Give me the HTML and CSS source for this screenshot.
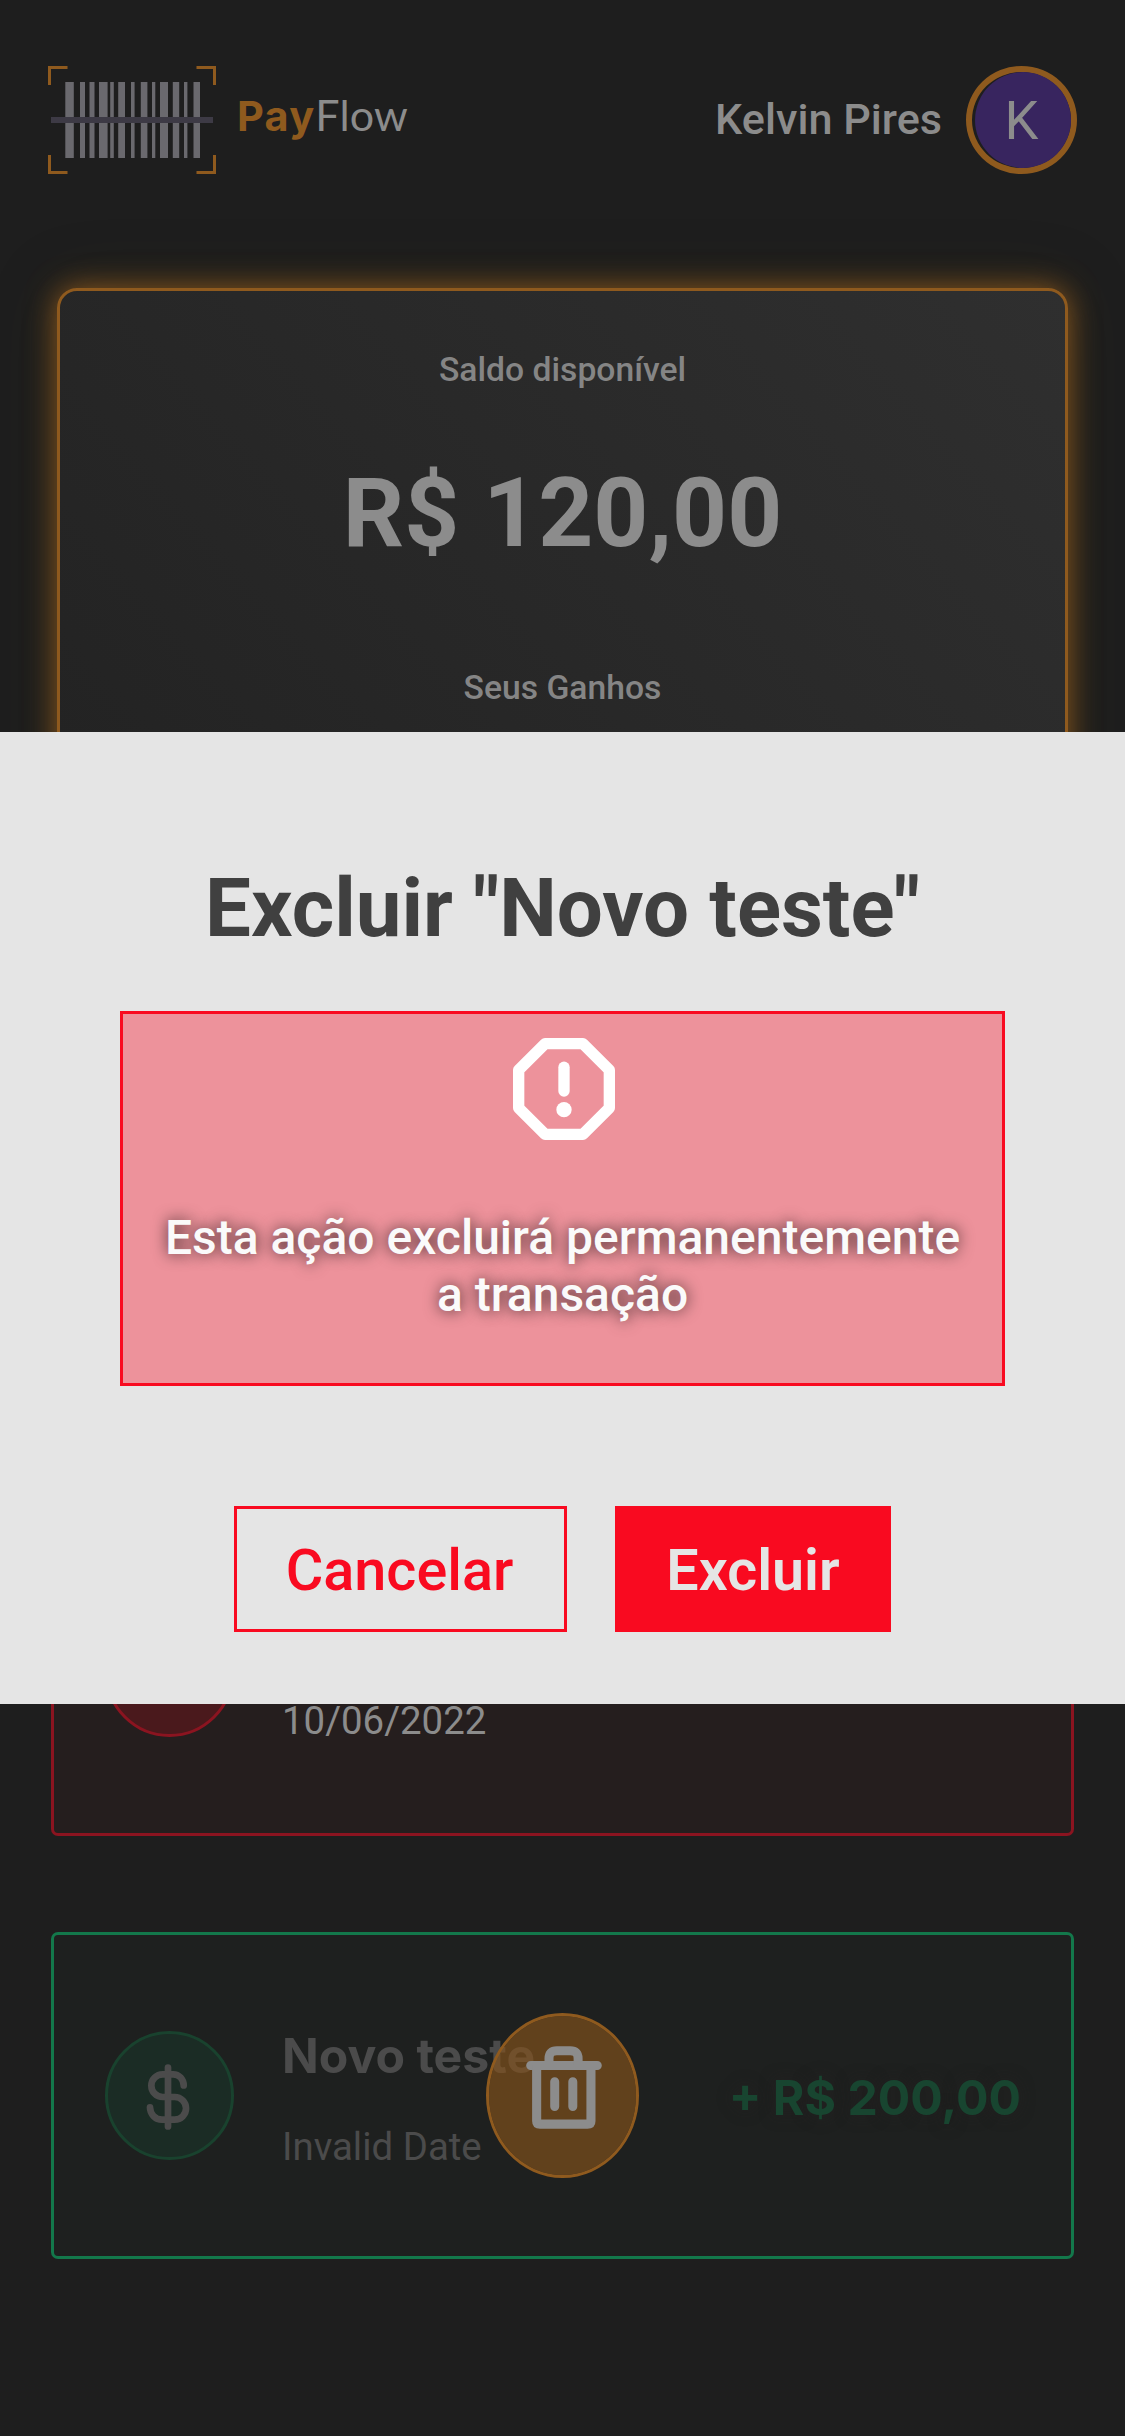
FILE: index.html
```html
<!DOCTYPE html>
<html lang="pt-BR">
<head>
<meta charset="utf-8">
<title>PayFlow</title>
<link rel="stylesheet" href="styles.css">
</head>
<body>
<div class="page">
  <header class="header">
    <div class="brand">
      <svg class="brand-mark" width="168" height="108" viewBox="0 0 168 108">
        <g fill="none" stroke="#8f5a1e" stroke-width="3">
          <path d="M1.5 19V1.5H19.5M148.5 1.5H166.5V19M166.5 89V106.5H148.5M19.5 106.5H1.5V89"/>
        </g>
        <g fill="#6a696e">
          <rect x="17.3" y="16" width="8.5" height="76"/>
          <rect x="32" y="16" width="5" height="76"/>
          <rect x="41.5" y="16" width="5" height="76"/>
          <rect x="51" y="16" width="8.6" height="76"/>
          <rect x="62.2" y="16" width="3.6" height="76"/>
          <rect x="70.2" y="16" width="6.8" height="76"/>
          <rect x="83" y="16" width="3.6" height="76"/>
          <rect x="92.8" y="16" width="6.6" height="76"/>
          <rect x="104" y="16" width="3.3" height="76"/>
          <rect x="112" y="16" width="8" height="76"/>
          <rect x="124.8" y="16" width="6.4" height="76"/>
          <rect x="136" y="16" width="3.4" height="76"/>
          <rect x="145.5" y="16" width="6.5" height="76"/>
        </g>
        <rect x="3" y="51" width="162" height="6" fill="#3d3a45"/>
      </svg>
      <div class="brand-name"><span class="brand-pay">Pay</span><span class="brand-flow">Flow</span></div>
    </div>
    <div class="user">
      <span class="user-name">Kelvin Pires</span>
      <div class="avatar-ring"><div class="avatar">K</div></div>
    </div>
  </header>

  <section class="balance">
    <p class="balance-label">Saldo disponível</p>
    <p class="balance-value">R$ 120,00</p>
    <p class="balance-label">Seus Ganhos</p>
  </section>

  <main class="items">
    <article class="item item-expense">
      <div class="item-icon"></div>
      <div class="item-text">
        <p class="item-date">10/06/2022</p>
      </div>
    </article>
    <article class="item item-income">
      <div class="item-icon">
        <svg width="45" height="66" viewBox="0 0 45 66" fill="none" stroke="#4b4b4b" stroke-width="6.7" stroke-linecap="round">
          <path d="M22 3.6V62.4M37.7 21.5A10.5 11.2 0 0 0 27.2 10.3H16.7A11.35 11.35 0 0 0 16.7 33H28.7A11.35 11.35 0 0 1 28.7 55.7H16A12 12.4 0 0 1 4 43.3"/>
        </svg>
      </div>
      <div class="item-text">
        <p class="item-title">Novo teste</p>
        <p class="item-date">Invalid Date</p>
      </div>
      <p class="item-amount">+ R$ 200,00</p>
      <button class="item-delete" aria-label="Excluir transação">
        <svg width="76" height="83" viewBox="0 0 76 83" fill="none" stroke="#8c8c8c">
          <path stroke-width="9" stroke-linecap="round" d="M4.7 19.5H71.3M28.7 35.8V60.5M46.8 35.8V60.5"/>
          <path stroke-width="9" d="M23 19V12.5Q23 4.7 30.8 4.7H44.3Q52.1 4.7 52.1 12.5V19"/>
          <path fill="#8c8c8c" stroke="none" fill-rule="evenodd" d="M6.1 19H69.5V75Q69.5 82.8 61.5 82.8H14.1Q6.1 82.8 6.1 75ZM15.2 24V73.4H60.4V24Z"/>
        </svg>
      </button>
    </article>
  </main>
</div>

<div class="modal-layer">
  <div class="modal" role="dialog">
    <h1 class="modal-title">Excluir "Novo teste"</h1>
    <div class="warning">
      <svg class="warning-icon" width="136" height="136" viewBox="0 0 24 24" fill="none" stroke="#fff" stroke-width="2">
        <path stroke-linejoin="round" d="M8.65 4h6.7L20 8.65v6.7L15.35 20h-6.7L4 15.35v-6.7z"/>
        <path stroke-linecap="round" d="M12 8.15v4.2"/>
        <circle cx="12" cy="15.65" r="1.35" fill="#fff" stroke="none"/>
      </svg>
      <p class="warning-text">Esta ação excluirá permanentemente a transação</p>
    </div>
    <div class="modal-actions">
      <button class="btn btn-outline">Cancelar</button>
      <button class="btn btn-solid">Excluir</button>
    </div>
  </div>
</div>
</body>
</html>
```
FILE: styles.css
```css
* {
  box-sizing: border-box;
  margin: 0;
  padding: 0;
}

body {
  background: #1e1e1e;
  font-family: Roboto, sans-serif;
  color: #8c8c8c;
}

.page {
  height: 2436px;
  overflow: hidden;
}

/* Header */
.header {
  display: flex;
  justify-content: space-between;
  align-items: center;
  padding: 66px 48px 0;
}

.brand,
.user {
  display: flex;
  align-items: center;
}

.brand-mark {
  display: block;
}

.brand-name {
  display: flex;
  align-items: baseline;
  margin-left: 21px;
  padding-bottom: 10px;
  font: 43px/52px Lato, sans-serif;
}

.brand-pay {
  font-family: Inter, sans-serif;
  font-size: 41.5px;
  font-weight: 700;
  letter-spacing: 1.2px;
  color: #8f5a1e;
}

.brand-flow {
  letter-spacing: 0.2px;
}

.user-name {
  font-size: 43.2px;
  line-height: 52px;
  font-weight: 500;
}

.avatar-ring {
  display: flex;
  justify-content: flex-end;
  width: 111px;
  height: 108px;
  margin-left: 24px;
  border: 6px solid #8f5a1e;
  border-radius: 50%;
}

.avatar {
  width: 96px;
  height: 96px;
  padding-right: 3px;
  border-radius: 50%;
  background: #38255f;
  font-size: 54px;
  line-height: 98px;
  text-align: center;
}

/* Balance card */
.balance {
  width: 1011px;
  height: 1125px;
  margin: 114px auto 0;
  padding-top: 59px;
  border: 3px solid #8f5a1e;
  border-radius: 20px;
  background: linear-gradient(to top right, #1e1e1e, #2f2f2f);
  box-shadow: 0 0 30px #8f5a1e, 0 0 66px rgba(48, 44, 12, 0.3);
  text-align: center;
}

.balance-label {
  font-size: 33.7px;
  line-height: 40px;
  font-weight: 500;
  color: #858585;
}

.balance-value {
  margin: 67px 0 99px;
  font-size: 96px;
  line-height: 112px;
  font-weight: 700;
}

/* Transactions */
.items {
  display: flex;
  flex-direction: column;
  gap: 96px;
  padding: 96px 51px 0;
}

.item {
  position: relative;
  display: flex;
  align-items: center;
  height: 327px;
  padding: 0 50px 0 51px;
  border: 3px solid;
  border-radius: 7px;
}

.item-expense {
  border-color: #8b1420;
  background: #251e1e;
}

.item-income {
  border-color: #13784b;
  background: #1e201f;
}

.item-icon {
  display: flex;
  justify-content: center;
  align-items: center;
  width: 129px;
  height: 129px;
  padding: 3px 3px 0 0;
  border: 3px solid;
  border-radius: 50%;
}

.item-expense .item-icon {
  border-color: #8b1420;
  background: #4a191c;
}

.item-income .item-icon {
  border-color: #19422e;
  background: #1b2c25;
}

.item-text {
  display: flex;
  flex-direction: column;
  gap: 39px;
  margin-left: 48px;
  padding-top: 5px;
}

.item-expense .item-text {
  padding-top: 96px;
}

.item-income .item-text {
  color: #4b4b4b;
}

.item-title {
  font: 700 48.2px/58px Inter, sans-serif;
}

.item-date {
  font-size: 38.4px;
  line-height: 45px;
}

.item-amount {
  margin-left: auto;
  padding-top: 4px;
  font: 700 48.2px/58px Inter, sans-serif;
  color: #184530;
  text-shadow: 0 0 15px rgba(40, 34, 34, 0.5);
}

.item-delete {
  position: absolute;
  top: 50%;
  left: 50%;
  display: flex;
  justify-content: center;
  width: 153px;
  height: 165px;
  padding: 30px 0 0 3px;
  border: 3px solid #8f5a1e;
  border-radius: 50%;
  background: rgba(133, 83, 28, 0.65);
  background-clip: padding-box;
  transform: translate(-77px, -83px);
}

/* Delete confirmation */
.modal-layer {
  position: fixed;
  inset: 0;
  display: flex;
  align-items: center;
}

.modal {
  display: flex;
  flex-direction: column;
  align-items: center;
  width: 100%;
  height: 972px;
  padding-top: 128px;
  background: #e5e5e5;
}

.modal-title {
  font-size: 81.6px;
  line-height: 96px;
  font-weight: 700;
  color: #404040;
}

.warning {
  display: flex;
  flex-direction: column;
  align-items: center;
  width: 885px;
  height: 375px;
  margin-top: 55px;
  padding: 7px 30px 0;
  border: 3px solid #f90a20;
  background: #ed929b;
}

.warning-icon {
  margin-left: 3px;
}

.warning-text {
  margin-top: 52px;
  font-size: 48px;
  line-height: 57px;
  font-weight: 500;
  text-align: center;
  color: #fafafa;
  text-shadow: 0 0 15px rgba(0, 0, 0, 0.75);
}

.modal-actions {
  display: flex;
  gap: 48px;
  margin-top: 120px;
}

.btn {
  height: 126px;
  padding: 3px 0 0;
  border: 3px solid #f90a20;
  font: 500 57.6px/1 Roboto, sans-serif;
}

.btn-outline {
  width: 333px;
  padding-right: 2px;
  background: none;
  color: #f90a20;
}

.btn-solid {
  width: 276px;
  background: #f90a20;
  color: #e5e5e5;
  font-size: 57.4px;
  font-weight: 600;
}
```
